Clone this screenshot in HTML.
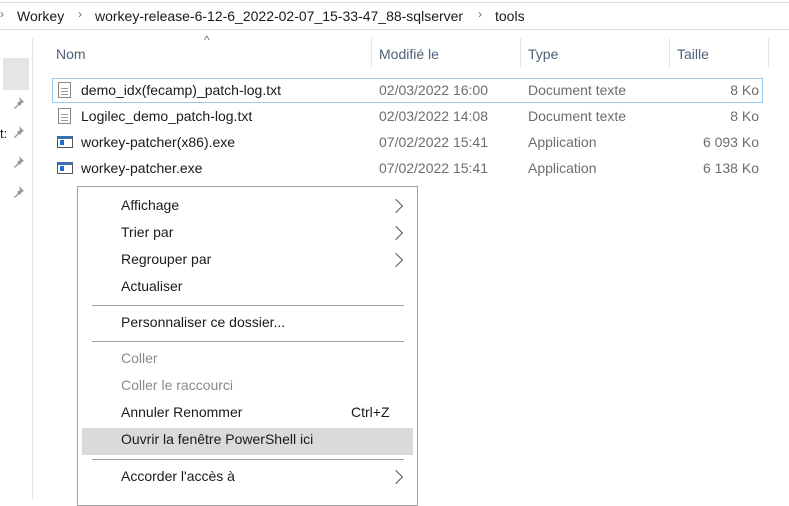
<!DOCTYPE html><html><head><style>
body{margin:0;width:789px;height:499px;background:#fff;font-family:"Liberation Sans",sans-serif;position:relative;overflow:hidden;font-size:13.5px;color:#1a1a1a}
.a{position:absolute;white-space:nowrap}
.g{color:#6d6d6d}.h{color:#4d5f78}
.pin{position:absolute;left:11px}
.mi{position:absolute;left:121px;white-space:nowrap;font-size:14px}
.ch{position:absolute;left:391px;width:9px;height:9px;border-right:1.2px solid #555;border-top:1.2px solid #555;transform:rotate(45deg)}
.sep{position:absolute;left:92px;width:312px;height:1px;background:#a0a0a0}
.doc{position:absolute;left:58px;width:13px;height:16px;border:1px solid #888;box-sizing:border-box;background:repeating-linear-gradient(#fff 0 2px,#999 2px 3px) 2px 3px/7px 10px no-repeat #fff}
.exe{position:absolute;left:57px;width:16px;height:12px;border:1px solid #555;border-top:3px solid #3c6fb0;box-sizing:border-box;background:#fff}
.exe:after{content:"";position:absolute;left:2px;top:1px;width:4px;height:5px;background:#1f6cd1}
</style></head><body>
<div class="a" style="left:0;top:2px;width:789px;height:1px;background:#ddd"></div>
<div class="a" style="left:0;top:29px;width:789px;height:1px;background:#ddd"></div>
<div class="a g" style="left:0;top:7px;font-size:12px">›</div>
<div class="a" style="left:17px;top:8px;font-size:14px">Workey</div>
<div class="a g" style="left:78px;top:7px;font-size:12px">›</div>
<div class="a" style="left:95px;top:8px;font-size:14px">workey-release-6-12-6_2022-02-07_15-33-47_88-sqlserver</div>
<div class="a g" style="left:478px;top:7px;font-size:12px">›</div>
<div class="a" style="left:495px;top:8px;font-size:14px">tools</div>
<div class="a" style="left:3px;top:58px;width:26px;height:32px;background:#e5e5e5"></div>
<div class="a" style="left:32px;top:38px;width:1px;height:461px;background:#e5e5e5"></div>
<svg class="pin" style="top:96px" width="14" height="14" viewBox="0 0 14 14"><path d="M8 1l5 5-2 1-2 3-1-1-4 4-1-1 4-4-1-1 3-2z" fill="#999"/></svg>
<svg class="pin" style="top:125px" width="14" height="14" viewBox="0 0 14 14"><path d="M8 1l5 5-2 1-2 3-1-1-4 4-1-1 4-4-1-1 3-2z" fill="#999"/></svg>
<svg class="pin" style="top:155px" width="14" height="14" viewBox="0 0 14 14"><path d="M8 1l5 5-2 1-2 3-1-1-4 4-1-1 4-4-1-1 3-2z" fill="#999"/></svg>
<svg class="pin" style="top:185px" width="14" height="14" viewBox="0 0 14 14"><path d="M8 1l5 5-2 1-2 3-1-1-4 4-1-1 4-4-1-1 3-2z" fill="#999"/></svg>
<div class="a" style="left:0;top:126px;font-size:13px">t:</div>
<div class="a g" style="left:204px;top:33px;font-size:12px">^</div>
<div class="a h" style="left:56px;top:46px;font-size:14px">Nom</div>
<div class="a" style="left:371px;top:38px;width:1px;height:30px;background:#e5e5e5"></div>
<div class="a h" style="left:379px;top:46px;font-size:14px">Modifié le</div>
<div class="a" style="left:520px;top:38px;width:1px;height:30px;background:#e5e5e5"></div>
<div class="a h" style="left:528px;top:46px;font-size:14px">Type</div>
<div class="a" style="left:669px;top:38px;width:1px;height:30px;background:#e5e5e5"></div>
<div class="a h" style="left:677px;top:46px;font-size:14px">Taille</div>
<div class="a" style="left:768px;top:38px;width:1px;height:30px;background:#e5e5e5"></div>
<div class="a" style="left:52px;top:78px;width:711px;height:25px;border:1px solid #99c9ef;box-sizing:border-box"></div>
<div class="doc" style="top:82px"></div><div class="doc" style="top:108px"></div>
<div class="exe" style="top:136px"></div><div class="exe" style="top:162px"></div>
<div class="a" style="left:81px;top:82px;font-size:14px">demo_idx(fecamp)_patch-log.txt</div>
<div class="a" style="left:81px;top:108px;font-size:14px">Logilec_demo_patch-log.txt</div>
<div class="a" style="left:81px;top:134px;font-size:14px">workey-patcher(x86).exe</div>
<div class="a" style="left:81px;top:160px;font-size:14px">workey-patcher.exe</div>
<div class="a g" style="left:379px;top:82px;font-size:14px">02/03/2022 16:00</div>
<div class="a g" style="left:379px;top:108px;font-size:14px">02/03/2022 14:08</div>
<div class="a g" style="left:379px;top:134px;font-size:14px">07/02/2022 15:41</div>
<div class="a g" style="left:379px;top:160px;font-size:14px">07/02/2022 15:41</div>
<div class="a g" style="left:528px;top:82px;font-size:14px">Document texte</div>
<div class="a g" style="left:528px;top:108px;font-size:14px">Document texte</div>
<div class="a g" style="left:528px;top:134px;font-size:14px">Application</div>
<div class="a g" style="left:528px;top:160px;font-size:14px">Application</div>
<div class="a g" style="right:30px;top:82px;font-size:14px">8 Ko</div>
<div class="a g" style="right:30px;top:108px;font-size:14px">8 Ko</div>
<div class="a g" style="right:30px;top:134px;font-size:14px">6 093 Ko</div>
<div class="a g" style="right:30px;top:160px;font-size:14px">6 138 Ko</div>
<div class="a" style="left:77px;top:186px;width:341px;height:320px;border:1px solid #a0a0a0;box-sizing:border-box;background:#fff"></div>
<div class="a" style="left:82px;top:428px;width:331px;height:27px;background:#dadada"></div>
<div class="mi" style="top:197px">Affichage</div><div class="ch" style="top:201px"></div>
<div class="mi" style="top:224px">Trier par</div><div class="ch" style="top:228px"></div>
<div class="mi" style="top:251px">Regrouper par</div><div class="ch" style="top:255px"></div>
<div class="mi" style="top:278px">Actualiser</div>
<div class="sep" style="top:305px"></div>
<div class="mi" style="top:314px">Personnaliser ce dossier...</div>
<div class="sep" style="top:341px"></div>
<div class="mi" style="top:350px;color:#8a8a8a">Coller</div>
<div class="mi" style="top:377px;color:#8a8a8a">Coller le raccourci</div>
<div class="mi" style="top:404px">Annuler Renommer</div>
<div class="a" style="left:351px;top:404px;font-size:14px">Ctrl+Z</div>
<div class="mi" style="top:431px">Ouvrir la fenêtre PowerShell ici</div>
<div class="sep" style="top:459px"></div>
<div class="mi" style="top:468px">Accorder l'accès à</div><div class="ch" style="top:472px"></div>
</body></html>
